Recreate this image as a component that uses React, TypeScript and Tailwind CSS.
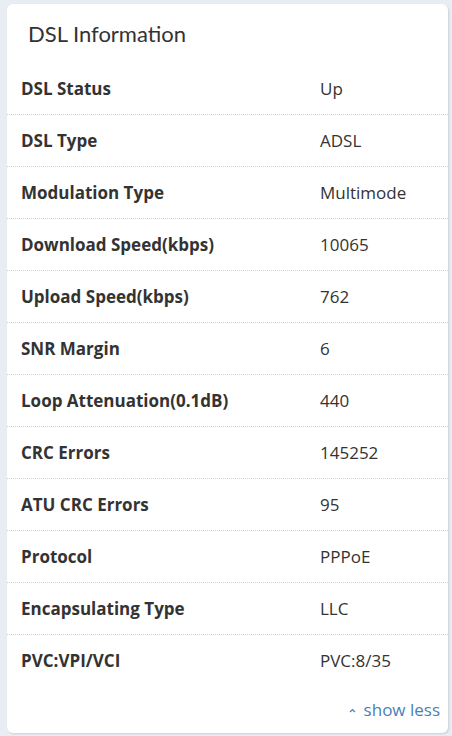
import React from "react";

const rows: [string, string][] = [
  ["DSL Status", "Up"],
  ["DSL Type", "ADSL"],
  ["Modulation Type", "Multimode"],
  ["Download Speed(kbps)", "10065"],
  ["Upload Speed(kbps)", "762"],
  ["SNR Margin", "6"],
  ["Loop Attenuation(0.1dB)", "440"],
  ["CRC Errors", "145252"],
  ["ATU CRC Errors", "95"],
  ["Protocol", "PPPoE"],
  ["Encapsulating Type", "LLC"],
  ["PVC:VPI/VCI", "PVC:8/35"],
];

export default function App() {
  return (
    <div
      className="w-[452px] h-[736px] bg-[#e7edf3] pl-[7px] pt-[4px] pr-[4px] pb-[3px]"
      style={{ fontFamily: "'Open Sans', 'Noto Sans', sans-serif" }}
    >
      <div className="h-full bg-white rounded-[6px] shadow-[1px_1px_2px_rgba(0,0,0,0.12)] flex flex-col text-[#333]">
        <div
          className="h-[59px] flex items-center pl-[21px] text-[22px] leading-none"
          style={{ fontFamily: "Lato, sans-serif" }}
        >
          DSL Information
        </div>
        <div className="flex flex-col">
          {rows.map(([k, v], i) => (
            <div
              key={k}
              className={
                "h-[52px] flex items-center " +
                (i < rows.length - 1 ? "border-b border-dotted border-[#cfcfcf]" : "")
              }
            >
              <div className="w-[313px] pl-[14px] text-[17px] font-bold">{k}</div>
              <div className="text-[17px]">{v}</div>
            </div>
          ))}
        </div>
        <div className="flex justify-end items-center pr-[8px] mt-[10px] text-[17px] text-[#4a80b8]">
          <svg width="7" height="5" viewBox="0 0 7 5" className="mr-[8px] mt-[2px]">
            <path d="M1 4 L3.5 1.5 L6 4" fill="none" stroke="#4a80b8" strokeWidth="1.2" />
          </svg>
          <span>show less</span>
        </div>
      </div>
    </div>
  );
}
